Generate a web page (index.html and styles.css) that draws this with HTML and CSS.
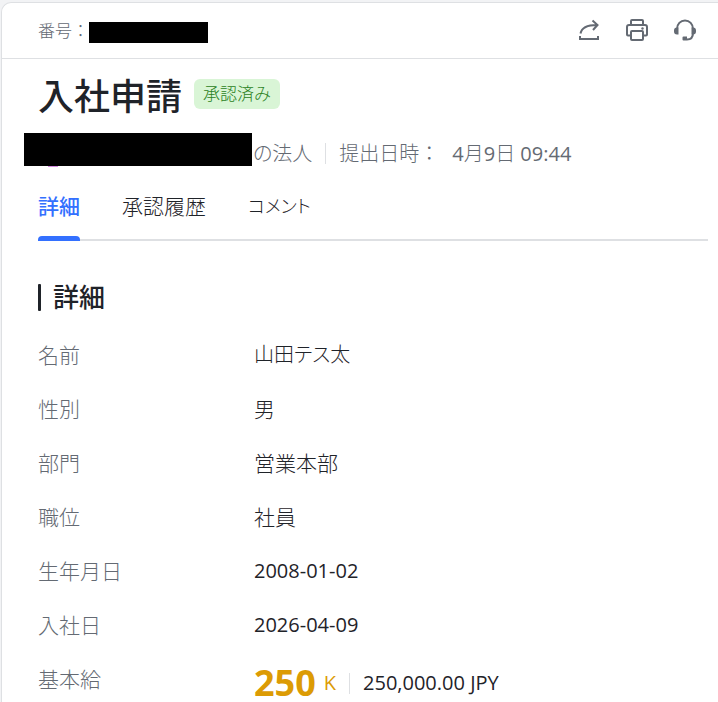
FILE: index.html
```html
<!DOCTYPE html>
<html lang="ja">
<head>
<meta charset="utf-8">
<meta name="viewport" content="width=device-width, initial-scale=1">
<title>入社申請</title>
<link rel="stylesheet" href="styles.css">
</head>
<body>
<main class="panel">
  <header class="toolbar">
    <div class="serial"><span>番号：</span><span class="redacted redacted-serial"></span></div>
    <div class="actions">
      <button class="icon-button" type="button" aria-label="共有">
        <svg viewBox="0 0 24 24"><path d="M3 18v3h18v-3M3.500 15.500C4.500 10 9 7 20 7M15.500 2.500 20.500 7l-4.500 5"/></svg>
      </button>
      <button class="icon-button" type="button" aria-label="印刷">
        <svg viewBox="0 0 24 24"><path d="M6 7V3a1 1 0 0 1 1-1h10a1 1 0 0 1 1 1v4M6 17.500H3a1 1 0 0 1-1-1V9a2 2 0 0 1 2-2h16a2 2 0 0 1 2 2v7.500a1 1 0 0 1-1 1h-3"/><rect x="6" y="13" width="12" height="9" rx="1"/><circle class="solid" cx="17.500" cy="10.500" r="1.200"/></svg>
      </button>
      <button class="icon-button" type="button" aria-label="サポート">
        <svg viewBox="0 0 24 24"><path d="M4 11c0-5 3.500-8.500 8-8.500s8 3.500 8 8.500v4c0 4-2 6.500-6 6.500"/><path class="solid" d="M5.500 9.500v7H4a3 3 0 0 1-3-3v-1a3 3 0 0 1 3-3zM18.500 9.500H20a3 3 0 0 1 3 3v1a3 3 0 0 1-3 3h-1.500zM10.500 18.500H14v4h-3.500a1 1 0 0 1-1-1v-2a1 1 0 0 1 1-1z"/></svg>
      </button>
    </div>
  </header>

  <div class="content">
    <div class="heading">
      <h1 class="title">入社申請</h1>
      <span class="badge">承認済み</span>
    </div>
    <div class="meta">
      <span class="redacted redacted-owner"></span>
      <div class="meta-text">
        <span class="kana">の法人</span>
        <span class="divider"></span>
        <span>提出日時：</span>
        <time><span class="latin">4</span>月<span class="latin">9</span>日 <span class="latin">09:44</span></time>
      </div>
    </div>

    <nav class="tabs">
      <a class="tab tab-active" href="#details" aria-current="page">詳細</a>
      <a class="tab" href="#history">承認履歴</a>
      <a class="tab kana" href="#comments">コメント</a>
    </nav>

    <section id="details">
      <h2 class="section-title">詳細</h2>
      <dl class="fields">
        <div class="field"><dt>名前</dt><dd class="kana">山田テス太</dd></div>
        <div class="field"><dt>性別</dt><dd>男</dd></div>
        <div class="field"><dt>部門</dt><dd>営業本部</dd></div>
        <div class="field"><dt>職位</dt><dd>社員</dd></div>
        <div class="field"><dt>生年月日</dt><dd class="latin">2008-01-02</dd></div>
        <div class="field"><dt>入社日</dt><dd class="latin">2026-04-09</dd></div>
        <div class="field"><dt>基本給</dt><dd class="salary latin"><strong>250</strong><span class="unit">K</span><span class="divider"></span><span class="amount">250,000.00 JPY</span></dd></div>
      </dl>
    </section>
  </div>
</main>
</body>
</html>
```

FILE: styles.css
```css
* {
  box-sizing: border-box;
}

body {
  margin: 0;
  padding: 2px 0 0 1px;
  background: #f2f3f5;
  color: #1f2329;
  font: 300 21px/28px "Open Sans", "Noto Sans CJK JP", sans-serif;
}

.latin {
  font-size: 20px;
  font-weight: 400;
}

.panel {
  min-height: calc(100vh - 2px);
  border: 1px solid #dee0e3;
  border-width: 1px 0 0 1px;
  border-radius: 10px 0 0 0;
  background: #fff;
}

.toolbar {
  display: flex;
  align-items: center;
  justify-content: space-between;
  height: 56px;
  padding: 0 21px 0 36px;
  border-bottom: 1px solid #dee0e3;
}

.serial {
  display: flex;
  align-items: center;
  color: #646a73;
  font-size: 17px;
}

.redacted {
  flex: none;
  background: #000;
}

.redacted-serial {
  width: 119px;
  height: 21px;
  margin-top: 4px;
}

.actions {
  display: flex;
  gap: 24px;
  padding-bottom: 2px;
}

.icon-button {
  width: 24px;
  height: 24px;
  padding: 0;
  border: 0;
  background: none;
  color: #646a73;
}

.icon-button svg {
  display: block;
  width: 24px;
  height: 24px;
  fill: none;
  stroke: currentColor;
  stroke-width: 2;
}

.icon-button .solid {
  fill: currentColor;
  stroke: none;
}

.content {
  padding: 12px 10px 0 36px;
}

.heading {
  display: flex;
  align-items: center;
  gap: 12px;
}

.title {
  margin: 0;
  padding-top: 4px;
  font-size: 36px;
  font-weight: 500;
  line-height: 44px;
}

.badge {
  padding: 0 9px;
  margin-bottom: 2px;
  border-radius: 6px;
  background: #d9f5d6;
  color: #2b821d;
  font-size: 17px;
  line-height: 30px;
}

.meta {
  display: flex;
  align-items: center;
  height: 33px;
  margin: 14px 0 0 -14px;
  color: #646a73;
}

.redacted-owner {
  position: relative;
  width: 228px;
  height: 33px;
}

.redacted-owner::after {
  position: absolute;
  top: 100%;
  left: 24px;
  width: 10px;
  height: 1px;
  background: #d58be0;
  content: "";
}

.meta-text {
  display: flex;
  align-items: center;
  padding: 8px 0 0 1px;
  font-size: 20px;
}

.divider {
  width: 1px;
  height: 21px;
  margin: 0 13px;
  background: #dee0e3;
}

.meta time {
  margin-left: 13px;
}

.kana {
  font-size: 20px;
  font-feature-settings: "palt";
}

.tabs {
  display: flex;
  gap: 42px;
  height: 75px;
  border-bottom: 2px solid #dee0e3;
}

.tab {
  height: 75px;
  padding-top: 26px;
  color: inherit;
  text-decoration: none;
}

.tab-active {
  position: relative;
  color: #3370ff;
  font-weight: 500;
}

.tab-active::after {
  position: absolute;
  right: 0;
  bottom: 0;
  left: 0;
  height: 5px;
  border-radius: 4px 4px 0 0;
  background: #3370ff;
  content: "";
}

.tab.kana {
  font-size: 18px;
}

.section-title {
  display: flex;
  align-items: center;
  gap: 12px;
  margin: 38px 0 0;
  font-size: 26px;
  font-weight: 500;
  line-height: 36px;
}

.section-title::before {
  width: 3px;
  height: 27px;
  border-radius: 1px;
  background: #1f2329;
  content: "";
}

.fields {
  display: grid;
  gap: 26px;
  margin: 26px 0 0;
}

.field {
  display: grid;
  grid-template-columns: 216px 1fr;
}

.field dt {
  color: #646a73;
}

.field dd {
  margin: 0;
}

.salary {
  display: flex;
  align-items: center;
}

.salary strong {
  color: #dc9b04;
  font-size: 36px;
  font-weight: 700;
  line-height: 36px;
}

.unit {
  margin-left: 8px;
  color: #dc9b04;
}
```
